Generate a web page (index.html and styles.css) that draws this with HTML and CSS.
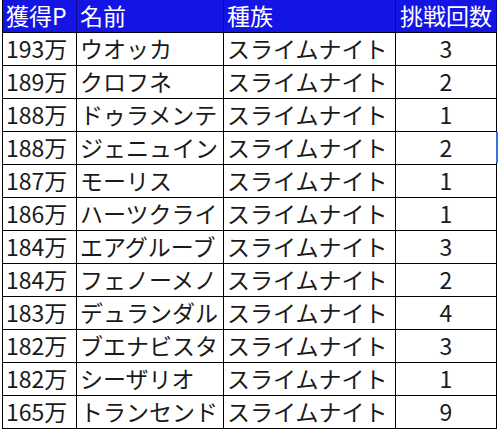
FILE: index.html
```html
<!DOCTYPE html>
<html lang="ja">
<head>
<meta charset="utf-8">
<link rel="stylesheet" href="styles.css">
</head>
<body>
<div class="sheet">
<table class="grid">
<colgroup><col class="c1"><col class="c2"><col class="c3"><col class="c4"></colgroup>
<thead>
<tr><th>獲得P</th><th>名前</th><th>種族</th><th class="num">挑戦回数</th></tr>
</thead>
<tbody>
<tr><td>193万</td><td>ウオッカ</td><td>スライムナイト</td><td class="num">3</td></tr>
<tr><td>189万</td><td>クロフネ</td><td>スライムナイト</td><td class="num">2</td></tr>
<tr><td>188万</td><td>ドゥラメンテ</td><td>スライムナイト</td><td class="num">1</td></tr>
<tr><td>188万</td><td>ジェニュイン</td><td>スライムナイト</td><td class="num">2</td></tr>
<tr><td>187万</td><td>モーリス</td><td>スライムナイト</td><td class="num">1</td></tr>
<tr><td>186万</td><td>ハーツクライ</td><td>スライムナイト</td><td class="num">1</td></tr>
<tr><td>184万</td><td>エアグルーブ</td><td>スライムナイト</td><td class="num">3</td></tr>
<tr><td>184万</td><td>フェノーメノ</td><td>スライムナイト</td><td class="num">2</td></tr>
<tr><td>183万</td><td>デュランダル</td><td>スライムナイト</td><td class="num">4</td></tr>
<tr><td>182万</td><td>ブエナビスタ</td><td>スライムナイト</td><td class="num">3</td></tr>
<tr><td>182万</td><td>シーザリオ</td><td>スライムナイト</td><td class="num">1</td></tr>
<tr><td>165万</td><td>トランセンド</td><td>スライムナイト</td><td class="num">9</td></tr>
</tbody>
</table>
<div class="sel"></div>
</div>
</body>
</html>
```
FILE: styles.css
```css
html, body {
  margin: 0;
  padding: 0;
  background: #fff;
}
.sheet {
  position: relative;
  width: 498px;
  height: 432px;
  overflow: hidden;
}
.grid {
  border-collapse: collapse;
  table-layout: fixed;
  width: 494px;
  margin-left: 2px;
  font-family: "Noto Sans CJK JP", "Noto Sans", sans-serif;
  font-size: 23px;
  line-height: 1.2;
}
.c1 { width: 74px; }
.c2 { width: 147px; }
.c3 { width: 172px; }
.c4 { width: 101px; }
.grid th, .grid td {
  border: 1px solid #000;
  padding: 0 0 0 3px;
  white-space: nowrap;
  overflow: visible;
  text-align: left;
  vertical-align: middle;
  font-weight: normal;
}
.grid thead th {
  background: #1414e6;
  color: #fff;
  height: 31px;
  border-top: none;
  border-left-color: #0b0b8a;
  border-right-color: #0b0b8a;
  border-bottom-color: #000;
  padding-bottom: 1px;
}
.grid thead th:first-child { border-left-color: #000; }
.grid tbody td {
  height: 32px;
  color: #1a1a1a;
}
.grid th.num, .grid td.num {
  text-align: center;
  padding-left: 0;
}
.sel {
  position: absolute;
  left: 496px;
  top: 132px;
  width: 2px;
  height: 31px;
  background: #3a6ed8;
}
```
